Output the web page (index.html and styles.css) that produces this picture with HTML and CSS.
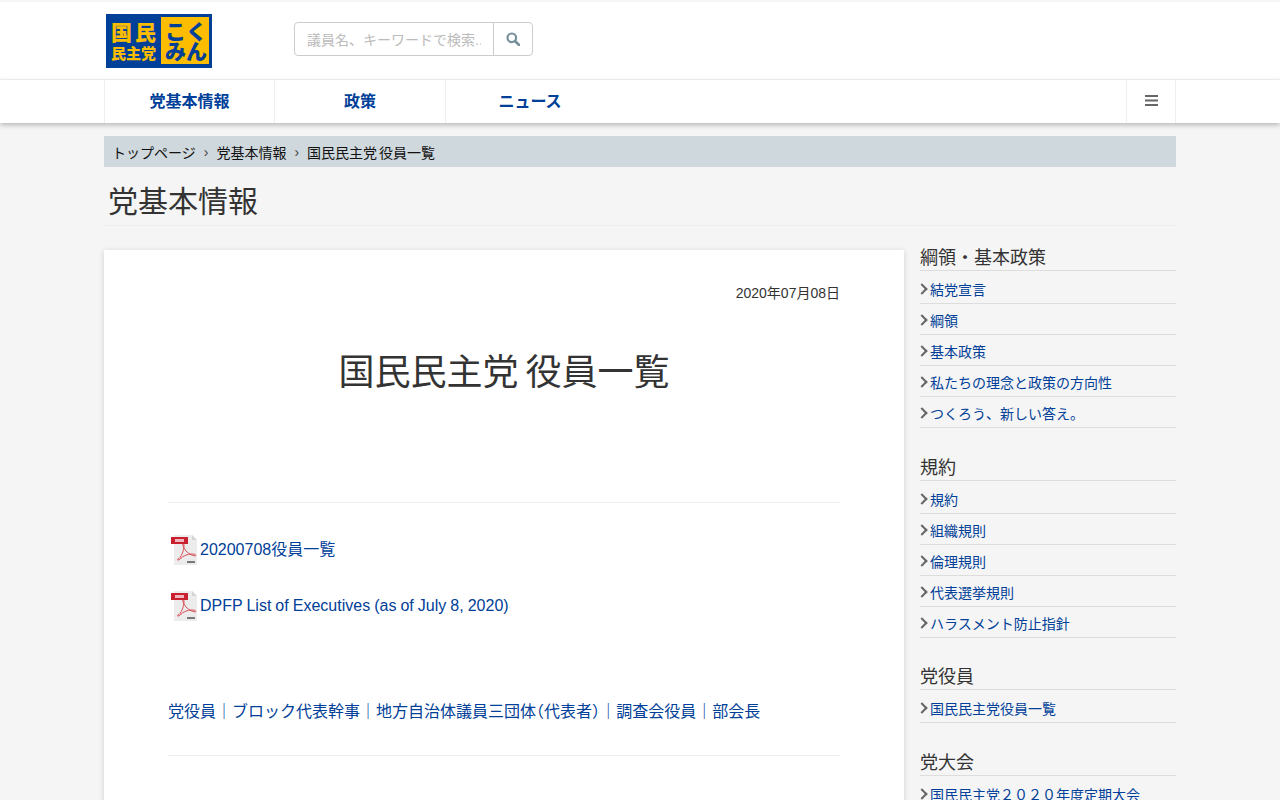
FILE: index.html
```html
<!DOCTYPE html>
<html lang="ja">
<head>
<meta charset="utf-8">
<title>国民民主党 役員一覧</title>
<link rel="stylesheet" href="styles.css">
</head>
<body>
<header class="site-top">
  <div class="wrap top-row">
    <a class="logo" href="#">
      <svg width="106" height="54" viewBox="0 0 106 54">
        <rect width="106" height="54" fill="#004098"/>
        <rect x="55" y="3" width="48" height="47" fill="#fcbc00"/>
        <text x="5" y="26" class="lg-a">国民</text>
        <text x="5" y="45" class="lg-b">民主党</text>
        <text x="59" y="25" class="lg-c">こく</text>
        <text x="59" y="45" class="lg-c">みん</text>
      </svg>
    </a>
    <form class="search">
      <input class="search-input" type="text" placeholder="議員名、キーワードで検索...">
      <button class="search-btn" type="button" aria-label="検索">
        <svg width="14" height="14" viewBox="0 0 14 14"><circle cx="5.8" cy="5.8" r="4.3" fill="none" stroke="#78909c" stroke-width="2.2"/><path d="M9 9l4 4" stroke="#78909c" stroke-width="2.6" stroke-linecap="round"/></svg>
      </button>
    </form>
  </div>
</header>
<nav class="site-nav">
  <div class="wrap nav-row">
    <a class="nav-item n1" href="#">党基本情報</a>
    <a class="nav-item n2" href="#">政策</a>
    <a class="nav-item n3" href="#">ニュース</a>
    <span class="nav-fill"></span>
    <a class="nav-burger" href="#" aria-label="メニュー">
      <svg width="13" height="11" viewBox="0 0 13 11"><path d="M0 0h13v2H0zM0 4.5h13v2H0zM0 9h13v2H0z" fill="#666"/></svg>
    </a>
  </div>
</nav>
<div class="wrap">
  <ol class="crumbs">
    <li>トップページ</li>
    <li class="sep">›</li>
    <li>党基本情報</li>
    <li class="sep">›</li>
    <li class="tight-sm">国民民主党 役員一覧</li>
  </ol>
  <h2 class="page-title">党基本情報</h2>
  <div class="columns">
    <main class="card">
      <p class="date">2020年07月08日</p>
      <h1 class="article-title">国民民主党 役員一覧</h1>
      <hr class="rule rule-a">
      <p class="pdf-line"><svg class="pdf" viewBox="0 0 28 32"><use href="#pdf-icon"/></svg><a href="#">20200708役員一覧</a></p>
      <p class="pdf-line second"><svg class="pdf" viewBox="0 0 28 32"><use href="#pdf-icon"/></svg><a class="tight-en" href="#">DPFP List of Executives (as of July 8, 2020)</a></p>
      <p class="links"><a href="#">党役員</a>｜<a href="#">ブロック代表幹事</a>｜<a href="#">地方自治体議員三団体<span class="halt">（</span>代表者<span class="halt">）</span></a>｜<a href="#">調査会役員</a>｜<a href="#">部会長</a></p>
      <hr class="rule rule-b">
    </main>
    <aside class="side">
      <section class="side-sec">
        <h3 class="side-h">綱領・基本政策</h3>
        <ul class="side-list">
          <li><a href="#">結党宣言</a></li>
          <li><a href="#">綱領</a></li>
          <li><a href="#">基本政策</a></li>
          <li><a href="#">私たちの理念と政策の方向性</a></li>
          <li><a href="#">つくろう、新しい答え。</a></li>
        </ul>
      </section>
      <section class="side-sec">
        <h3 class="side-h">規約</h3>
        <ul class="side-list">
          <li><a href="#">規約</a></li>
          <li><a href="#">組織規則</a></li>
          <li><a href="#">倫理規則</a></li>
          <li><a href="#">代表選挙規則</a></li>
          <li><a href="#">ハラスメント防止指針</a></li>
        </ul>
      </section>
      <section class="side-sec">
        <h3 class="side-h">党役員</h3>
        <ul class="side-list">
          <li><a href="#">国民民主党役員一覧</a></li>
        </ul>
      </section>
      <section class="side-sec">
        <h3 class="side-h">党大会</h3>
        <ul class="side-list">
          <li><a href="#">国民民主党２０２０年度定期大会</a></li>
        </ul>
      </section>
    </aside>
  </div>
</div>
<svg class="defs" width="0" height="0" aria-hidden="true">
  <symbol id="pdf-icon" viewBox="0 0 28 32">
    <path d="M3 1h18l5 5v25H3z" fill="#ececec"/>
    <path d="M21 1l5 5h-5z" fill="#d4d4d4"/>
    <rect x="0" y="3" width="17" height="7" fill="#c8202f"/>
    <rect x="4" y="5" width="9" height="3" fill="#f0b8be"/>
    <path d="M7 25c3-1 6-8 6-14-1-3-2 0 0 3 2 4 6 7 11 8 2-1 0-2-3-2-5 0-9 2-12 5-2 2-3 1-2 0z" fill="none" stroke="#d8404c" stroke-width=".9"/>
    <rect x="16" y="27" width="8" height="2" fill="#777"/>
  </symbol>
</svg>
</body>
</html>
```
FILE: styles.css
```css
* { box-sizing: border-box; }
html, body { margin: 0; padding: 0; }
body {
  background: #f5f5f5;
  color: #333;
  font-family: "Helvetica Neue", Helvetica, Arial, "Noto Sans CJK JP", sans-serif;
  font-size: 14px;
  height: 800px;
  overflow: hidden;
}
a { color: #004098; text-decoration: none; }
.defs { position: absolute; }
.wrap { width: 1072px; margin: 0 auto; }
.halt { font-feature-settings: "halt"; font-family: "Noto Sans CJK JP", sans-serif; }
.tight-sm { word-spacing: -2px; }
.tight-en { word-spacing: -.4px; }

.site-top {
  height: 77px;
  margin: 2px 0 1px;
  background: #fff;
  border-radius: 0 0 4px 4px;
}
.top-row { display: flex; align-items: flex-start; padding-left: 2px; padding-top: 12px; }
.logo { display: block; width: 106px; height: 54px; }
.logo svg { display: block; }
.lg-a { font: 900 21px "Noto Sans CJK JP", sans-serif; fill: #fcbc00; letter-spacing: 3px; }
.lg-b { font: 900 15px "Noto Sans CJK JP", sans-serif; fill: #fcbc00; }
.lg-c { font: 900 21px "Noto Sans CJK JP", sans-serif; fill: #004098; }

.search { display: flex; margin-left: 82px; margin-top: 8px; height: 34px; }
.search-input {
  width: 200px;
  height: 34px;
  padding: 2px 12px 0;
  border: 1px solid #ccc;
  border-radius: 4px 0 0 4px;
  font: inherit;
  color: #555;
  background: #fff;
}
.search-input::placeholder { color: #bbb; opacity: 1; }
.search-btn {
  width: 40px;
  height: 34px;
  margin-left: -1px;
  padding: 0;
  border: 1px solid #ccc;
  border-radius: 0 4px 4px 0;
  background: #fff;
  display: flex;
  align-items: center;
  justify-content: center;
}

.site-nav {
  height: 43px;
  background: #fff;
  box-shadow: 0 2px 5px rgba(0, 0, 0, .26);
  position: relative;
}
.nav-row { display: flex; height: 43px; border-left: 1px solid #eee; }
.nav-item {
  display: flex;
  align-items: center;
  justify-content: center;
  height: 43px;
  font-size: 16px;
  font-weight: 700;
  border-right: 1px solid #eee;
  padding-bottom: 3px;
}
.n1 { width: 170px; }
.n2 { width: 171px; }
.n3 { width: 168px; border-right: 0; }
.nav-fill { flex: 1; }
.nav-burger {
  width: 50px;
  padding-bottom: 2px;
  border-left: 1px solid #eee;
  border-right: 1px solid #eee;
  display: flex;
  align-items: center;
  justify-content: center;
}
.nav-burger svg { display: block; }

.crumbs {
  display: flex;
  align-items: center;
  height: 31px;
  margin: 13px 0 0;
  padding: 0 8px;
  list-style: none;
  background: #cfd8dc;
  color: #111;
  font-size: 14px;
}
.sep { margin: 0 8px; color: #444; }

.page-title {
  height: 59px;
  margin: 0 0 24px;
  padding: 17px 0 0 4px;
  font-size: 30px;
  font-weight: 400;
  line-height: 36px;
  color: #333;
  border-bottom: 1px solid #eee;
}

.columns { display: flex; gap: 16px; align-items: flex-start; }
.card {
  width: 800px;
  height: 700px;
  padding: 33px 64px 0;
  background: #fff;
  box-shadow: 0 1px 6px rgba(0, 0, 0, .14);
  flex: none;
}
.date { margin: 0; text-align: right; line-height: 20px; font-size: 14px; }
.article-title {
  margin: 48px 0 0;
  text-align: center;
  font-size: 36px;
  font-weight: 400;
  line-height: 44px;
  word-spacing: -3px;
}
.rule { border: 0; border-top: 1px solid #eee; margin: 0; }
.rule-a { margin-top: 107px; }
.rule-b { margin-top: 31px; }
.pdf-line {
  display: flex;
  align-items: center;
  margin: 31px 0 0 3px;
  height: 32px;
  font-size: 16px;
  line-height: 20px;
}
.pdf-line.second { margin-top: 24px; }
.pdf { width: 28px; height: 32px; flex: none; margin-right: 1px; }
.links { margin: 76px 0 0; font-size: 16px; line-height: 24px; color: #004098; }

.side { flex: 1; min-width: 0; }
.side-sec { margin-bottom: 32px; }
.side-sec:nth-child(2) { margin-bottom: 31px; }
.side-h {
  margin: 0;
  height: 21px;
  font-size: 18px;
  font-weight: 400;
  line-height: 16px;
  color: #333;
  border-bottom: 1px solid #ddd;
}
.side-list { list-style: none; margin: 0; padding: 2px 0 0; }
.side-list li {
  height: 31px;
  padding: 7px 0 0 10px;
  border-bottom: 1px solid #ddd;
  line-height: 20px;
  font-size: 14px;
  position: relative;
}
.side-list li::before {
  content: "";
  position: absolute;
  left: -2px;
  bottom: 10px;
  width: 6px;
  height: 6px;
  border-top: 2.5px solid #666;
  border-right: 2.5px solid #666;
  transform: rotate(45deg);
}
```
